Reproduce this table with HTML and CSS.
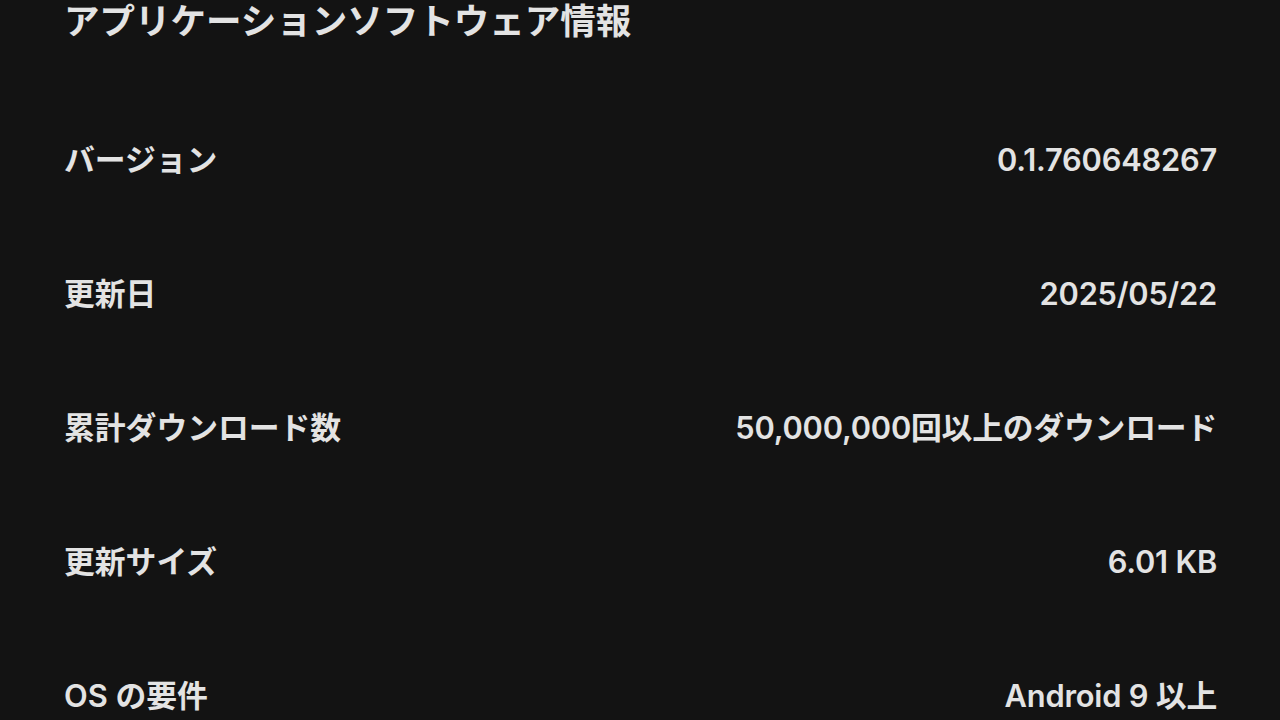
FILE: index.html
```html
<!DOCTYPE html>
<html lang="ja">
<head>
<meta charset="utf-8">
<link rel="stylesheet" href="styles.css">
</head>
<body>
<main class="page">
  <h1 class="title">アプリケーションソフトウェア情報</h1>
  <dl class="info">
    <div class="row"><dt>バージョン</dt><dd>0.1.760648267</dd></div>
    <div class="row"><dt>更新日</dt><dd>2025/05/22</dd></div>
    <div class="row"><dt>累計ダウンロード数</dt><dd>50,000,000回以上のダウンロード</dd></div>
    <div class="row"><dt>更新サイズ</dt><dd>6.01 KB</dd></div>
    <div class="row"><dt>OS の要件</dt><dd>Android 9 以上</dd></div>
  </dl>
</main>
</body>
</html>
```
FILE: styles.css
```css
html, body {
  margin: 0;
  padding: 0;
  background: #131313;
  height: 100%;
  overflow: hidden;
}
.page {
  padding: 0 63px 0 64px;
  color: #e3e3e3;
  font-family: Inter, "Noto Sans CJK JP", sans-serif;
  font-weight: 600;
}
.title {
  margin: 0;
  font-size: 35.5px;
  line-height: 44px;
  font-weight: 600;
}
.info {
  margin: 49px 0 0;
  padding: 0;
}
.row {
  height: 134px;
  display: flex;
  align-items: center;
  justify-content: space-between;
}
.row dt, .row dd {
  margin: 0;
  font-size: 30.8px;
  line-height: 40px;
}
.row dd {
  letter-spacing: -0.2px;
}
```
